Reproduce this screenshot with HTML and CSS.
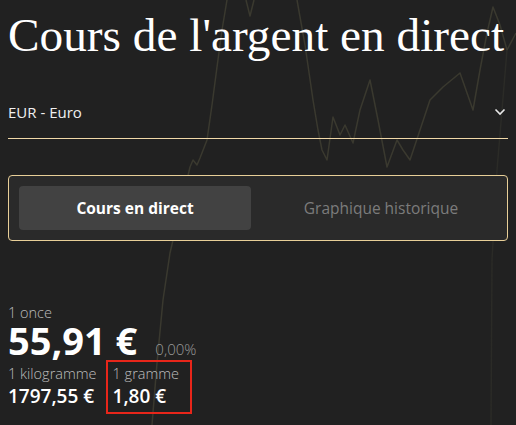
FILE: index.html
```html
<!DOCTYPE html>
<html lang="fr">
<head>
<meta charset="utf-8">
<link rel="stylesheet" href="styles.css">
</head>
<body>
<svg class="bg-chart" width="516" height="425" viewBox="0 0 516 425">
  <polyline class="line" points="152,425 157,363 163,300 170,253 180,210 190,167 193,160 197,165 200,158 207,140 212,105 217,67 222,30 227,0"/>
  <polyline class="line" points="246,0 250,16 254,0"/>
  <polyline class="line" points="297,0 305,45 313,100 318,130 322,150 327,160 333,117 340,135 345,125 353,143 360,110 370,80 378,120 387,167 397,140 403,150 410,160 420,130 430,100 443,87 460,73 473,110 480,70 487,33 493,7 500,25 507,50 516,33"/>
  <polyline class="line faint" points="507,50 497,170 492,260 491,425"/>
</svg>
<main class="page">
  <h1 class="title">Cours de l'argent en direct</h1>
  <div class="select">
    <span class="select-label">EUR - Euro</span>
    <svg class="chevron" width="12" height="8" viewBox="0 0 12 8"><path d="M1.5 1.5 L6 6 L10.5 1.5" fill="none" stroke="#e8e8e8" stroke-width="1.6"/></svg>
  </div>
  <div class="tabs">
    <div class="tab active">Cours en direct</div>
    <div class="tab">Graphique historique</div>
  </div>
  <section class="prices">
    <div class="label">1 once</div>
    <div class="main-row">
      <span class="main-price">55,91 €</span>
      <span class="change">0,00%</span>
    </div>
    <div class="sub-row">
      <div class="sub">
        <div class="label">1 kilogramme</div>
        <div class="sub-price">1797,55 €</div>
      </div>
      <div class="sub highlight">
        <div class="label">1 gramme</div>
        <div class="sub-price">1,80 €</div>
      </div>
    </div>
  </section>
</main>
</body>
</html>
```
FILE: styles.css
```css
html, body {
  margin: 0;
  padding: 0;
  background: #212121;
}
body {
  width: 516px;
  height: 425px;
  overflow: hidden;
  position: relative;
  font-family: "Open Sans", "Noto Sans", sans-serif;
  color: #fff;
}
.bg-chart {
  position: absolute;
  left: 0;
  top: 0;
  z-index: 0;
}
.bg-chart .line {
  fill: none;
  stroke: #3a392f;
  stroke-width: 1.5;
  stroke-linejoin: round;
}
.bg-chart .line.faint {
  stroke: #2b2b27;
}
.page {
  position: relative;
  z-index: 1;
  padding: 0 8px;
}
.title {
  margin: 0;
  padding-top: 8px;
  font-family: "Liberation Serif", "Times New Roman", serif;
  font-weight: normal;
  font-size: 47.3px;
  line-height: 54px;
  color: #fff;
  white-space: nowrap;
}
.select {
  margin-top: 40px;
  height: 36px;
  border-bottom: 1px solid #f0d8a8;
  display: flex;
  align-items: flex-start;
  justify-content: space-between;
}
.select-label {
  font-size: 15px;
  line-height: 20px;
  color: #f0f0f0;
}
.chevron {
  margin-top: 6px;
  margin-right: 2px;
}
.tabs {
  margin-top: 36px;
  height: 66px;
  border: 1px solid #e8cf98;
  border-radius: 4px;
  background: #2a2a2a;
  box-sizing: border-box;
  padding: 10px;
  display: flex;
  gap: 14px;
}
.tab {
  flex: 1;
  display: flex;
  align-items: center;
  justify-content: center;
  font-size: 15.5px;
  color: #7c7c7c;
  border-radius: 4px;
}
.tab.active {
  background: #424242;
  color: #fff;
  font-weight: bold;
}
.prices {
  margin-top: 63px;
}
.label {
  font-size: 14.5px;
  line-height: 18px;
  color: #bdbdbd;
  font-weight: 300;
}
.main-row {
  display: flex;
  align-items: baseline;
  gap: 18px;
  height: 36px;
}
.main-price {
  font-size: 38px;
  font-weight: bold;
  line-height: 36px;
}
.change {
  font-size: 15px;
  color: #9a9a9a;
  font-weight: 300;
}
.sub-row {
  display: flex;
  align-items: flex-start;
  gap: 9px;
  margin-top: 7px;
}
.sub-price {
  font-size: 19px;
  line-height: 26px;
  font-weight: 600;
}
.sub.highlight {
  border: 2px solid #e8261a;
  padding: 3px 11px 3px 5px;
  margin-top: -5px;
}
```
